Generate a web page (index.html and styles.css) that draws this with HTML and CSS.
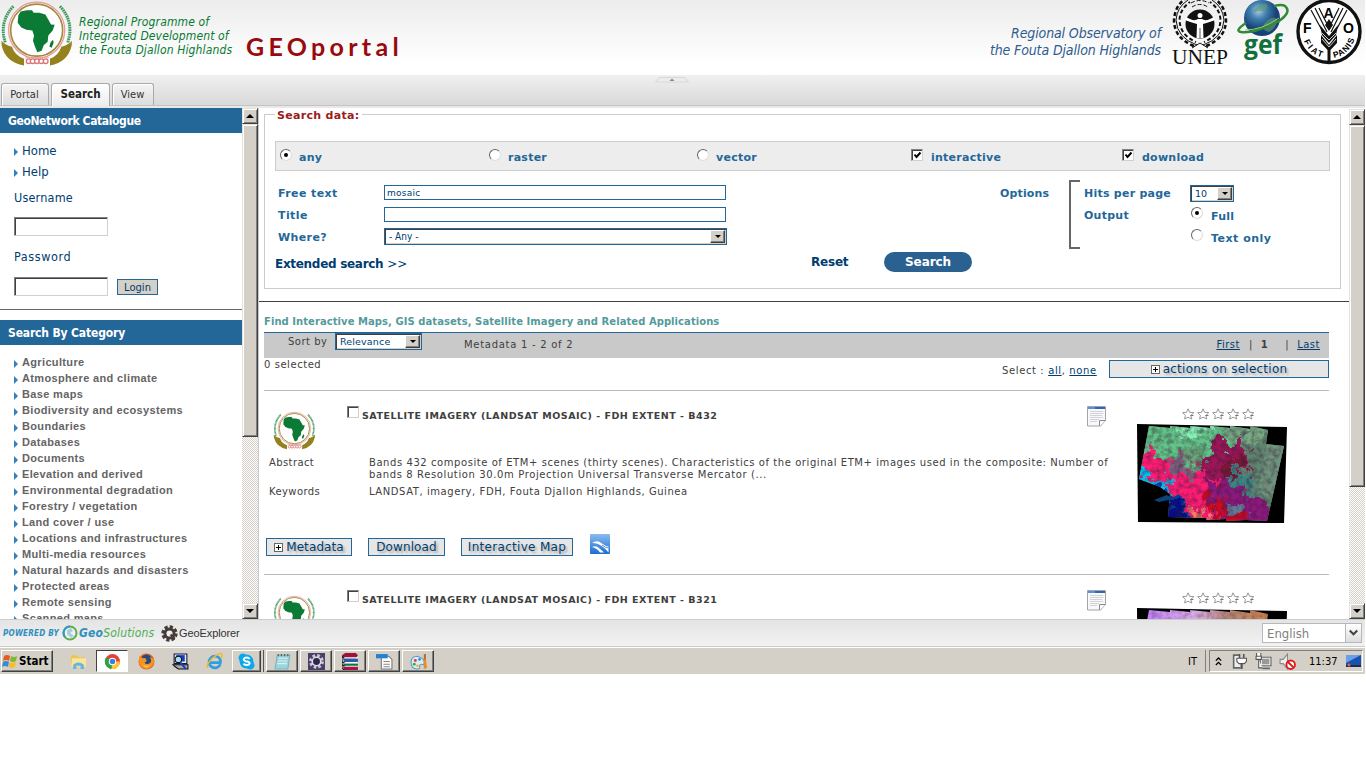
FILE: index.html
```html
<!DOCTYPE html>
<html lang="en">
<head>
<meta charset="utf-8">
<title>GEOportal</title>
<link rel="stylesheet" href="styles.css">
</head>
<body>
<svg class="defs" width="0" height="0">
  <defs>
    <symbol id="africa" viewBox="0 0 216 200">
      <circle cx="110" cy="90" r="84" fill="#fff" stroke="#e39a9a" stroke-width="4"/>
      <circle cx="110" cy="90" r="78" fill="#fff" stroke="#a58a3c" stroke-width="5"/>
      <path d="M55 45 62 34 80 30 96 30 101 38 118 38 136 43 146 60 153 73 164 74 158 91 145 106 143 125 131 135 125 152 112 156 105 140 99 122 102 106 97 91 79 89 64 82 53 68zM159 119l2 9-6 15-7-4 4-13z" fill="#0a7a34"/>
      <path d="M40 18Q-4 66 16 128" fill="none" stroke="#3f9a60" stroke-width="9" stroke-dasharray="5 2"/>
      <path d="M180 18Q224 66 203 128" fill="none" stroke="#3f9a60" stroke-width="9" stroke-dasharray="5 2"/>
      <path d="M4 122q10 12 32 18 8 26 36 36v20q-56-10-67-60zM216 122q-10 12-32 18-8 26-34 36v20q54-10 65-60z" fill="#96811f"/>
      <g fill="#fff" stroke="#dd7777" stroke-width="4"><circle cx="86" cy="183" r="7"/><circle cx="98" cy="183" r="7"/><circle cx="111" cy="183" r="7"/><circle cx="124" cy="183" r="7"/><circle cx="137" cy="183" r="7"/></g>
      <path d="M76 173h70" stroke="#e7a2a2" stroke-width="3"/>
    </symbol>
    <symbol id="note" viewBox="0 0 20 21">
      <path d="M.5.5h18v14l-5 5.500H.5z" fill="#f8f8f8" stroke="#a4a4a4"/>
      <path d="M1 1h17v2H1z" fill="#5b8fd6"/><path d="M8 1h10v2H8z" fill="#2e66bd"/>
      <path d="M3 5.500h13M3 7.500h13M3 9.500h12M3 11.500h13M3 13.500h9M3 15.500h7" stroke="#d0d4da"/>
      <path d="M12.500 20v-5.500h6" fill="#fff" stroke="#8a8a8a"/>
    </symbol>
    <symbol id="star" viewBox="0 0 13 12">
      <path d="M6 .8 7.600 4.300 11.800 4.700 8.800 7.400 9.800 11 6 9.200 2.600 11 3.400 7.400.6 4.700 4.600 4.300z" fill="#fff" stroke="#999"/>
      <path d="M8.500 7.500h3" stroke="#777"/>
    </symbol>
    <filter id="rough" x="-5%" y="-5%" width="110%" height="110%" color-interpolation-filters="sRGB">
      <feTurbulence type="fractalNoise" baseFrequency="0.08" numOctaves="5" seed="7" result="n"/>
      <feDisplacementMap in="SourceGraphic" in2="n" scale="34" xChannelSelector="R" yChannelSelector="G"/>
    </filter>
    <filter id="grain" x="0" y="0" width="100%" height="100%" color-interpolation-filters="sRGB">
      <feTurbulence type="fractalNoise" baseFrequency="0.2" numOctaves="4" seed="3"/>
      <feColorMatrix values="0 0 0 0 .2  0 0 0 0 .1  0 0 0 0 .2  1 0 0 0 -.36"/>
    </filter>
    <clipPath id="mosaic"><path d="M12 2 33 4V2l20 2V2l20 2V2l20 2V2l20 3V2l18 4-2 14 18 2-17 75-21-1-20 1v-2l-20 1v-2l-38-1 2-23-10-7-21-8z"/></clipPath>
  </defs>
</svg>

<div class="app">
  <header class="banner">
    <svg class="banner-logo" viewBox="0 0 216 200"><use href="#africa"/></svg>
    <div class="tagline">Regional Programme of<br>Integrated Development of<br>the Fouta Djallon Highlands</div>
    <h1 class="brand">GEOportal</h1>
    <div class="observatory">Regional Observatory of<br>the Fouta Djallon Highlands</div>
    <svg class="unep" viewBox="0 0 56 66">
      <g fill="none" stroke="#111">
        <path d="M25 45Q5 38 4 20 5 7 16 0M31 45Q51 38 52 20 51 7 40 0"/>
        <path d="M22 46Q2 38 2 20 3 6 13-1M34 46Q54 38 54 20 53 6 43-1" stroke-width="2.500" stroke-dasharray="4 2.500"/>
        <path d="M24 42Q8 35 7.500 20 8 9 18 2M32 42Q48 35 48.500 20 48 9 38 2" stroke-width="2" stroke-dasharray="4 2.500" stroke-dashoffset="3"/>
        <path d="M19 3Q28-2 37 3M20 7Q28 2 36 7" stroke-dasharray="4 2"/>
        <path d="M20 48 28 43 36 48"/>
      </g>
      <circle cx="28" cy="24" r="14.500" fill="#111"/>
      <path d="M14 17q8 5 12 2h4q4 3 12-2v3.500q-8 2.500-11 3.500l.5 14h-7l.5-14q-3-1-11-3.500z" fill="#fff"/>
      <circle cx="28" cy="15.500" r="2.500" fill="#fff"/><path d="M28 28v10" stroke="#111" stroke-width=".7"/>
      <text x="0" y="64" class="unep-text" textLength="56" lengthAdjust="spacingAndGlyphs">UNEP</text>
    </svg>
    <svg class="gef" viewBox="0 0 54 64">
      <defs><radialGradient id="globe" cx=".4" cy=".3"><stop offset="0" stop-color="#a9cbe4"/><stop offset=".45" stop-color="#4180b0"/><stop offset="1" stop-color="#174177"/></radialGradient></defs>
      <circle cx="26" cy="18" r="18" fill="url(#globe)"/>
      <path d="M17 12q5-9 13-8 4 3-2 7-6 0-11 1zM28 24q7-9 13-5 0 9-8 13-8-1-5-8z" fill="#5d9a72" opacity=".65"/>
      <path d="M10 23Q-2 31 5 32 18 34 43 21 56 12 49 6 46 4 38 6" fill="none" stroke="#2f8c35" stroke-width="2.500"/>
      <path d="M9 30Q26 30 43 18" fill="none" stroke="#9cce77"/>
      <text x="8" y="54" class="gef-text" textLength="38" lengthAdjust="spacingAndGlyphs">gef</text>
    </svg>
    <svg class="fao" viewBox="0 0 66 66">
      <defs><path id="fiat" d="M8 41A26 26 0 0 0 29 58"/><path id="panis" d="M38 58A26 26 0 0 0 59 36"/></defs>
      <circle cx="33" cy="31.500" r="31" fill="#fff" stroke="#111" stroke-width="3.400"/>
      <g class="fao-text"><text x="7" y="33">F</text><text x="27.500" y="18">A</text><text x="47" y="33">O</text></g>
      <g fill="none" stroke="#111" stroke-width="1.200"><path d="M15 10 28 34M19 8 31 32M47 8 35 32M51 10 38 34M23 8 31 24M43 8 35 24"/></g>
      <path d="M33 19 37 25 33 31 29 25zM24 25 33 36 42 25 40 35 33 43 26 35zM25 35 33 45 41 35 41 43 34.500 50V61h-3V50L25 43z" fill="#111"/>
      <path d="M26 33 33 40 40 33M26 39 33 47 40 39" fill="none" stroke="#fff" stroke-width=".8"/>
      <g class="fao-ring"><text><textPath href="#fiat" textLength="25">FIAT</textPath></text><text><textPath href="#panis" textLength="29">PANIS</textPath></text></g>
    </svg>
  </header>

  <nav class="tabs">
    <span class="tab tab-portal">Portal</span><span class="tab active">Search</span><span class="tab tab-view">View</span>
    <svg class="collapse" viewBox="0 0 36 6"><path d="M5.500 .5h25l4 4.500H1.500z" fill="#ececec" stroke="#d8d8d8"/><path d="M18 1.500 20.500 4h-5z" fill="#888"/></svg>
  </nav>

  <main class="body">
    <aside class="sidebar">
      <div class="side-content">
        <h2 class="side-title">GeoNetwork Catalogue</h2>
        <div class="login">
          <a class="side-link">Home</a>
          <a class="side-link">Help</a>
          <label class="user-label">Username</label>
          <span class="sunken"></span>
          <label class="pass-label">Password</label>
          <div class="pass-row"><span class="sunken"></span><button class="login-btn">Login</button></div>
        </div>
        <h2 class="side-title">Search By Category</h2>
        <ul class="cats">
          <li>Agriculture</li><li>Atmosphere and climate</li><li>Base maps</li><li>Biodiversity and ecosystems</li><li>Boundaries</li><li>Databases</li><li>Documents</li><li>Elevation and derived</li><li>Environmental degradation</li><li>Forestry / vegetation</li><li>Land cover / use</li><li>Locations and infrastructures</li><li>Multi-media resources</li><li>Natural hazards and disasters</li><li>Protected areas</li><li>Remote sensing</li><li>Scanned maps</li>
        </ul>
      </div>
      <div class="scrollbar"><span class="sb-btn up"></span><span class="sb-thumb side-thumb"></span><span class="sb-track"></span><span class="sb-btn down"></span></div>
    </aside>

    <section class="content">
      <div class="page">
        <div class="search-box">
          <span class="legend">Search data:</span>
          <div class="types">
            <span class="type t1"><i class="radio on"></i><b>any</b></span>
            <span class="type t2"><i class="radio"></i><b>raster</b></span>
            <span class="type t3"><i class="radio"></i><b>vector</b></span>
            <span class="type t4"><i class="check"><svg viewBox="0 0 9 9"><path d="m1.500 3.500 2 2.500 4-4.500" fill="none" stroke="#000" stroke-width="2"/></svg></i><b>interactive</b></span>
            <span class="type t5"><i class="check"><svg viewBox="0 0 9 9"><path d="m1.500 3.500 2 2.500 4-4.500" fill="none" stroke="#000" stroke-width="2"/></svg></i><b>download</b></span>
          </div>
          <div class="form">
            <div class="fields">
              <div class="field"><label>Free text</label><span class="text-input">mosaic</span></div>
              <div class="field"><label>Title</label><span class="text-input"></span></div>
              <div class="field"><label>Where?</label><span class="select where"><em>- Any -</em><i></i></span></div>
            </div>
            <div class="opt-label">Options</div>
            <div class="options">
              <div class="opt"><label>Hits per page</label><span class="select hits"><em>10</em><i></i></span></div>
              <div class="opt"><label>Output</label><i class="radio on"></i><b>Full</b></div>
              <div class="opt"><label></label><i class="radio"></i><b class="wide-b">Text only</b></div>
            </div>
          </div>
          <div class="actions"><a class="extended">Extended search <span>&gt;&gt;</span></a><a class="reset">Reset</a><button class="pill">Search</button></div>
        </div>
        <div class="rule"></div>
        <div class="find">Find Interactive Maps, GIS datasets, Satellite Imagery and Related Applications</div>
        <div class="sortbar">
          <span class="sort-label">Sort by</span><span class="select sort"><em>Relevance</em><i></i></span><span class="count">Metadata 1 - 2 of 2</span>
          <span class="pager"><u>First</u><span>|</span><b>1</b><span class="bar2">|</span><u>Last</u></span>
        </div>
        <div class="selrow"><span class="selected">0 selected</span><span class="selects">Select : <u>all</u>, <u>none</u></span><span class="btn wide"><i class="plus"></i>actions on selection</span></div>

        <article class="record">
          <div class="rec-top">
            <svg class="rec-logo"><use href="#africa"/></svg>
            <i class="check"></i><h3>SATELLITE IMAGERY (LANDSAT MOSAIC) - FDH EXTENT - B432</h3>
            <svg class="note"><use href="#note"/></svg>
          </div>
          <dl class="meta">
            <dt>Abstract</dt><dd>Bands 432 composite of ETM+ scenes (thirty scenes). Characteristics of the original ETM+ images used in the composite: Number of<br><span class="line2">bands 8 Resolution 30.0m Projection Universal Transverse Mercator (...</span></dd>
            <dt>Keywords</dt><dd>LANDSAT, imagery, FDH, Fouta Djallon Highlands, Guinea</dd>
          </dl>
          <div class="btns">
            <span class="btn b1"><i class="plus"></i>Metadata</span><span class="btn b2">Download</span><span class="btn b3">Interactive Map</span>
            <svg class="wind" viewBox="0 0 20 20"><defs><linearGradient id="wb" x2="0" y2="1"><stop stop-color="#8abcf0"/><stop offset="1" stop-color="#1b6fd0"/></linearGradient></defs><rect width="20" height="20" rx="1" fill="url(#wb)"/><path d="M2 9Q7 5.500 12 9.500 15 12 18.500 12.500V18.500Q15 14 11 11.500 7 8.500 2 9z" fill="#fff"/><path d="M12 11Q15 13.500 18.500 14" stroke="#4b92e0" fill="none"/><path d="M2 13Q6 11 9 14L14 18.500H10Q7 14 2 13z" fill="#fff"/></svg>
          </div>
          <div class="thumb">
            <div class="stars"><svg><use href="#star"/></svg><svg><use href="#star"/></svg><svg><use href="#star"/></svg><svg><use href="#star"/></svg><svg><use href="#star"/></svg></div>
            <svg class="map" viewBox="0 0 150 99">
              <path d="M0 0 150 3 147 99 1 98z"/>
              <g clip-path="url(#mosaic)">
                <rect width="150" height="99" fill="#6f8f78"/>
                <g filter="url(#rough)">
                  <path d="M-20-20H170V60L118 55 100 30 78 24 60 38 35 30-20 40z" fill="#62c488"/>
                  <path d="M35-20H75V10L58 14 42 8z" fill="#86efb4"/>
                  <path d="M78-20H160V24L110 28 92 10z" fill="#76a982"/>
                  <path d="M108 15H170V120H122L108 60z" fill="#5f8570"/>
                  <path d="M68 32 80 10 96 20 108 20 108 55 94 68 66 62z" fill="#9c1658"/>
                  <path d="M84 40 104 28 104 56 88 60z" fill="#7d1735"/>
                  <path d="M-20 22 14 26 32 34 60 42 80 62 96 120H40L36 76 22 62-20 58z" fill="#ff1c74"/>
                  <path d="M30 36 50 38 60 46 48 52 34 52z" fill="#7d6280"/>
                  <path d="M66 58 100 60 116 72 134 78V120H88L74 82z" fill="#8d187e"/>
                  <path d="M88 58 100 46 118 56 120 68 104 70z" fill="#3c8583"/>
                  <path d="M68 78 84 72 90 84 76 90zM84 88 98 84 108 96 100 110 80 110z" fill="#cc0a22"/>
                  <path d="M92 76 106 78 110 90 98 92z" fill="#66789a"/>
                  <path d="M53 84 64 88 74 94V120H54z" fill="#fa7a6a"/>
                  <path d="M-20 44 8 48 22 58 34 68 46 78 54 120H-20z" fill="#0040a8"/>
                  <path d="M-20 40 8 44 24 56 36 66 34 69 20 60 6 52-20 50z" fill="#00c4f4"/>
                  <path d="M32 76 44 80 52 120H30z" fill="#050d86"/>
                </g>
                <path d="M49 23 67 22 65 38 45 36z" fill="#6aa377" opacity=".75"/>
                <path d="M130 20 150 22 138 76 121 68z" fill="#7a9d84" opacity=".65"/>
                <rect width="150" height="99" filter="url(#grain)"/>
              </g>
              <path d="M17 76 30 71 36 75 22 78z" fill="#0b4478"/>
            </svg>
          </div>
        </article>

        <article class="record">
          <div class="rec-top">
            <svg class="rec-logo"><use href="#africa"/></svg>
            <i class="check"></i><h3>SATELLITE IMAGERY (LANDSAT MOSAIC) - FDH EXTENT - B321</h3>
            <svg class="note"><use href="#note"/></svg>
          </div>
          <div class="thumb">
            <div class="stars"><svg><use href="#star"/></svg><svg><use href="#star"/></svg><svg><use href="#star"/></svg><svg><use href="#star"/></svg><svg><use href="#star"/></svg></div>
            <svg class="map" viewBox="0 0 150 99">
              <defs><linearGradient id="m2"><stop offset=".05" stop-color="#c080fa"/><stop offset=".4" stop-color="#deb0e8"/><stop offset=".58" stop-color="#b88a80"/><stop offset=".85" stop-color="#c8804c"/></linearGradient></defs>
              <path d="M0 0 150 3 147 99 1 98z"/>
              <g clip-path="url(#mosaic)"><rect width="150" height="99" fill="url(#m2)"/><rect width="150" height="99" filter="url(#grain)" opacity=".6"/></g>
            </svg>
          </div>
        </article>
      </div>
      <div class="scrollbar main-sb"><span class="sb-btn up"></span><span class="sb-thumb main-thumb"></span><span class="sb-track"></span><span class="sb-btn down"></span></div>
    </section>
  </main>

  <footer class="status">
    <span class="powered">POWERED BY</span>
    <svg class="geo-ring" viewBox="0 0 16 16"><circle cx="8" cy="8" r="6.500" fill="#e9f2f7" stroke="#5dae46" stroke-width="2"/><path d="M8 1.500A6.500 6.500 0 0 0 3 12" fill="none" stroke="#3d96c2" stroke-width="2"/><path d="M5 5 9 3l2 3-3 2 4 3-3 2-4-4z" fill="#a9cbdb"/></svg>
    <span class="geosol"><b>Geo</b>Solutions</span>
    <svg class="gear" viewBox="0 0 16 16"><circle cx="8" cy="8" r="6.200" fill="none" stroke="#463c37" stroke-width="3" stroke-dasharray="3 1.870"/><circle cx="8" cy="8" r="4.300" fill="#eee" stroke="#463c37" stroke-width="2.800"/><path d="m9 9 4 4" stroke="#463c37" stroke-width="2"/></svg>
    <span class="explorer">GeoExplorer</span>
    <span class="lang"><em>English</em><i><svg viewBox="0 0 16 18"><path d="m4 7 4 4 4-4" fill="none" stroke="#444" stroke-width="2.200"/></svg></i></span>
  </footer>

  <div class="taskbar">
    <span class="start"><svg viewBox="0 0 16 16"><path d="M2 3q3-2 6 0L7 8Q4 6 1 8z" fill="#e65a25"/><path d="M9 3q3 2 6 0l-1 5q-3 2-6 0z" fill="#80b735"/><path d="M1 9q3-2 6 0l-1 5q-3-2-6 0z" fill="#398bd0"/><path d="M8 9q3 2 6 0l-1 5q-3 2-6 0z" fill="#f6bd26"/></svg>Start</span>
    <span class="task flat"><svg viewBox="0 0 16 16"><path d="M1 2h6l1 2h6v9H1z" fill="#edc452"/><path d="M2 5h13v8H1z" fill="#fbe49c"/><path d="M3 15v-4q5-4 10 0v4h-3v-3H6v3z" fill="#63b5e4"/></svg></span>
    <span class="task pressed"><svg viewBox="0 0 16 16"><circle cx="8" cy="8" r="7" fill="#e34133"/><path d="M8 8 2 4A7 7 0 0 0 7 15z" fill="#2ba24b"/><path d="M8 8h7a7 7 0 0 1-8 7z" fill="#fbcb2e"/><circle cx="8" cy="8" r="3.500" fill="#fff"/><circle cx="8" cy="8" r="2.600" fill="#3b7de0"/></svg></span>
    <span class="task flat"><svg viewBox="0 0 16 16"><circle cx="8" cy="8" r="7.500" fill="#dc6316"/><circle cx="8" cy="6.500" r="5" fill="#244a86"/><path d="M1 3q2 0 3 2 4-1 4 2 0 2-2 2 2 3 6 0 1-3-1-5 5 1 4 5-2 6-7 6-7-1-7-7z" fill="#f8941d"/><path d="M3 8q3 6 8 3-2 4-5 2z" fill="#fdca55"/></svg></span>
    <span class="task flat"><svg viewBox="0 0 16 16"><path d="M2 1h12v9H2z" fill="#e9e9ef" stroke="#15163f"/><path d="M4 2h8v6H4z" fill="#173fc2"/><path d="M1 11h14v4H6l-3-2z" fill="#aaa" stroke="#111"/><circle cx="6" cy="6" r="3" fill="#a8ddf7" stroke="#111"/><path d="m8 9 5 6" stroke="#173fc2" stroke-width="2"/></svg></span>
    <span class="task flat"><svg viewBox="0 0 16 16"><path d="M13.500 10.500A5.500 5.500 0 1 1 13 5.500q1 2 .5 3.500H4" fill="none" stroke="#2f9ee0" stroke-width="2.600"/><path d="M2 14Q-1 12 6 5 13-1 15 1q1 1-1 4" fill="none" stroke="#f1b92c" stroke-width="1.400"/></svg></span>
    <span class="task raised skype"><svg viewBox="0 0 16 16"><circle cx="8" cy="8" r="6.500" fill="#0aa9ed"/><circle cx="4.500" cy="4.500" r="4" fill="#0aa9ed"/><circle cx="11.500" cy="11.500" r="4" fill="#0aa9ed"/><path d="M11 5.500Q9 3.500 6.500 4.500 4 6.500 7 7.700 11 8 11 9.700 10 12.500 5 10.500" fill="none" stroke="#fff" stroke-width="1.800"/></svg></span>
    <span class="task raised"><svg viewBox="0 0 16 16"><path d="M3 2h12l-2 13H1z" fill="#9bd4dc" stroke="#7eb3bb"/><path d="M4 5h9M3.500 7.500h9M3 10h9" stroke="#d8f1f4"/><path d="M4 1v2M7 1v2M10 1v2M13 1v2" stroke="#555"/></svg></span>
    <span class="task raised"><svg viewBox="0 0 16 16"><path d="M0 0h16v16H0z" fill="#4a3e6a"/><circle cx="8" cy="8" r="5.500" fill="none" stroke="#c9c6d8" stroke-width="3" stroke-dasharray="2.400 1.920"/><circle cx="8" cy="8" r="4" fill="#2d254c" stroke="#ddd" stroke-width="1.500"/></svg></span>
    <span class="task raised"><svg viewBox="0 0 16 16"><path d="M0 2 3 0h10l2 2-2 3H2z" fill="#9e123a"/><path d="M2 4.500h13" stroke="#fff"/><path d="M1 5.500h14v3.500H2z" fill="#225fb1"/><path d="M3 9h12" stroke="#fff"/><path d="M1 10h14v2.500H2z" fill="#127149"/><path d="M3 12.500h12" stroke="#fff"/><path d="M1 13h14v3H2z" fill="#a21840"/><path d="M0 2v12l2 2M2 5 0 3M2 9.500 0 8M2 12.500 0 11" stroke="#1b1b1b" fill="none"/></svg></span>
    <span class="task raised"><svg viewBox="0 0 16 16"><path d="M5 3h7l3 3v9H5z" fill="#fff" stroke="#777"/><path d="M0 1h11v4H0z" fill="#2481cf"/><path d="M7 8h6M7 10.500h6M7 13h6" stroke="#888"/></svg></span>
    <span class="task raised"><svg viewBox="0 0 16 16"><path d="M7 3Q1 3 1 9t6 6q3 0 2-3 0-2 4-1 2-6-6-8z" fill="#d9eef9" stroke="#5a9fc2"/><circle cx="5" cy="7" r="1.400" fill="#de403b"/><circle cx="9" cy="6" r="1.300" fill="#3a8ad0"/><circle cx="4" cy="10.500" r="1.400" fill="#44a846"/><circle cx="7" cy="12" r="1.200" fill="#eeb51f"/><path d="M14 1v6" stroke="#ba6d25" stroke-width="2"/><path d="M13 6h2l1 8-3 1z" fill="#ef8a20"/></svg></span>
    <span class="it">IT</span>
    <span class="tray">
      <svg class="chev" viewBox="0 0 8 12"><path d="m1 5 3-3 3 3M1 10l3-3 3 3" fill="none" stroke="#000" stroke-width="1.500"/></svg>
      <svg class="plug" viewBox="0 0 16 16"><path d="M8 2H2.500v12H9" fill="#eee" stroke="#666" stroke-width="1.500"/><path d="M8 1v4M12 1v4" stroke="#555" stroke-width="1.500"/><path d="M5.500 5h9v3l-2 2h-5l-2-2z" fill="#fff" stroke="#555"/><path d="M10 10v5" stroke="#555" stroke-width="2"/></svg>
      <svg class="net" viewBox="0 0 16 16"><path d="M5 4h10v8H5z" fill="#999" stroke="#555"/><path d="M6 5h8v6H6z" fill="none" stroke="#eee"/><path d="M7 14.500h7" stroke="#666" stroke-width="1.500"/><path d="M1.500 0v3h4V0M1 3h5v3H1zM3.500 6v8H7" fill="#fff" stroke="#555"/></svg>
      <svg class="vol" viewBox="0 0 16 16"><path d="M1 6h3l4-5v14l-4-5H1z" fill="#eee" stroke="#888"/><circle cx="11" cy="11" r="4" fill="#fff" stroke="#dc1c1c" stroke-width="1.800"/><path d="m8.200 8.200 5.600 5.600" stroke="#dc1c1c" stroke-width="1.800"/></svg>
      <span class="clock">11:37</span>
      <svg class="desk" viewBox="0 0 15 12"><path d="M0 0h15v12H0z" fill="#1651b1"/><path d="M0 0h15L0 8z" fill="#699fe4"/><path d="M0 10h15v2H0z" fill="#202a48"/><circle cx="3" cy="10" r="1.500" fill="#e86037"/></svg>
    </span>
  </div>
</div>
</body>
</html>
```
FILE: styles.css
```css
* { box-sizing: border-box; }
body { margin: 0; background: #fff; font-family: "DejaVu Sans", Verdana, sans-serif; overflow: hidden; }
h1, h2, h3, ul, dl, dd, dt { margin: 0; padding: 0; }
em, i { font-style: normal; }
svg { display: block; flex: none; }
.defs { position: absolute; }
.app { width: 1365px; height: 674px; display: flex; flex-direction: column; white-space: nowrap; }

/* banner */
.banner { height: 75px; display: flex; align-items: flex-start; background: linear-gradient(#ececec, #fff 85%); flex: none; }
.banner-logo { width: 72px; height: 67px; }
.tagline { width: 167px; padding: 15px 0 0 7px; font: italic 12px/14px "DejaVu Sans Condensed", sans-serif; letter-spacing: .13px; color: #087a34; }
.brand { width: 170px; padding: 30px 0 0 7px; font: bold 25px/32px Lato, sans-serif; letter-spacing: 4.300px; color: #990a0e; }
.observatory { margin-left: auto; padding-top: 25px; text-align: right; font: italic 14px/17px "DejaVu Sans Condensed", sans-serif; letter-spacing: -.13px; color: #2e5c8c; }
.unep { width: 56px; height: 66px; margin-left: 11px; overflow: visible; }
.unep-text { font: 20px "Liberation Serif", serif; fill: #111; }
.gef { width: 54px; height: 64px; margin-left: 8px; overflow: visible; }
.gef-text { font: bold 26px "Open Sans", sans-serif; fill: #11703b; }
.fao { width: 66px; height: 66px; margin: 0 3px 0 6px; }
.fao-text { font: bold 14px "Liberation Sans", sans-serif; }
.fao-ring { font: bold 8.500px "Liberation Sans", sans-serif; }

/* tab strip */
.tabs { height: 33px; flex: none; display: flex; align-items: flex-start; padding: 7px 0 0 1px; background: linear-gradient(#efefef, #d9d9d9 29px, #c4c4c4 29px, #c4c4c4 30px, #e8e8e8 30px, #e8e8e8 32px, #d0d0d0 32px); border-top: 1px solid #eee; }
.tab { height: 22px; width: 48px; margin-right: 2px; padding-right: 1px; border: 1px solid #aaa; border-bottom: 0; border-radius: 3px 3px 0 0; background: linear-gradient(#f5f5f5, #dcdcdc); color: #333; font: 11px/21px "DejaVu Sans Condensed", sans-serif; text-align: center; box-shadow: inset 1px 1px #fff; }
.tab.active { width: 59px; height: 23px; padding-right: 0; background: linear-gradient(#fff, #ececec); font-weight: bold; font-size: 11.500px; line-height: 21px; letter-spacing: 0; color: #222; }
.tab-view { width: 42px; }
.collapse { width: 36px; height: 6px; margin: -6px 0 0 498px; }

/* columns */
.body { height: 511px; display: flex; overflow: hidden; flex: none; }
.sidebar { width: 259px; display: flex; border-right: 1px solid #c8c8d0; flex: none; }
.side-content { width: 242px; height: 511px; overflow: hidden; }
.side-title { height: 25px; padding-left: 8px; background: #236799; color: #fff; font: bold 12px/26px "DejaVu Sans Condensed", sans-serif; letter-spacing: -.38px; }
.login + .side-title { letter-spacing: -.15px; }
.login { height: 177px; margin-bottom: 10px; padding: 7px 0 0 14px; border-bottom: 1px solid #666; display: flex; flex-direction: column; font: 13px/21px "DejaVu Sans Condensed", sans-serif; color: #003d70; }
.side-link { height: 21px; display: flex; align-items: center; gap: 4px; }
.side-link::before, .cats li::before { content: ""; width: 0; border: 4px solid transparent; border-left-color: #347fbd; border-right: 0; margin-top: 2px; }
.user-label { height: 21px; margin: 5px 0 9px; font-size: 12.500px; letter-spacing: .2px; }
.pass-label { height: 21px; margin: 10px 0 10px; font-size: 12.500px; letter-spacing: .6px; }
.sunken { width: 94px; height: 19px; background: #fff; border: 1px solid; border-color: #808080 #d4d0c8 #d4d0c8 #808080; box-shadow: inset 1px 1px #404040; flex: none; }
.pass-row { display: flex; gap: 9px; align-items: flex-end; }
.login-btn { width: 41px; height: 16px; margin-bottom: 1px; padding: 1px 0 0; border: 1px solid #236799; background: #d4d0c8; color: #003d70; font: 10px/13px "DejaVu Sans", sans-serif; }
.cats { list-style: none; padding: 9px 0 0 14px; font: bold 11px/16px "Liberation Sans", sans-serif; letter-spacing: .35px; color: #646464; }
.cats li { height: 16px; display: flex; align-items: center; gap: 4px; }
.cats li::before { margin-top: 3px; }

/* scrollbars */
.scrollbar { width: 16px; display: flex; flex-direction: column; }
.sb-btn, .sb-thumb { background: #d4d0c8; border: 1px solid; border-color: #e6e3dd #404040 #404040 #e6e3dd; box-shadow: inset 1px 1px #fff, inset -1px -1px #808080; flex: none; }
.sb-btn { height: 16px; display: grid; place-items: center; }
.sb-btn::after { content: ""; border: 4px solid transparent; }
.sb-btn.up::after { border-top: 0; border-bottom-color: #000; }
.sb-btn.down::after { border-bottom: 0; border-top-color: #000; }
.side-thumb { height: 313px; }
.main-thumb { height: 362px; }
.sb-track { flex: 1; background: conic-gradient(#d4d0c8 25%, #fff 0 50%, #d4d0c8 0 75%, #fff 0) 0 0/2px 2px; }
.main-sb { padding-top: 1px; }

/* search form */
.content { flex: 1; display: flex; min-width: 0; }
.page { width: 1090px; height: 511px; overflow: hidden; color: #404040; }
.search-box { width: 1077px; height: 175px; margin: 6px 0 0 5px; padding: 26px 10px 0; border: 1px solid #ccc; color: #236799; font: bold 11px/14px "DejaVu Sans", sans-serif; letter-spacing: .25px; }
.legend { display: block; width: 87px; height: 14px; margin: -32px 0 18px; padding-left: 2px; background: #fff; color: #9a1c20; letter-spacing: .3px; }
.types { height: 30px; display: flex; background: #ededed; border: 1px solid #ccc; }
.type { display: flex; align-items: flex-start; padding-top: 7px; }
.type b { margin: 2px 0 0 7px; }
.t1 { width: 209px; padding-left: 4px; } .t2 { width: 208px; padding-left: 4px; } .t3 { width: 217px; padding-left: 4px; }
.t4 { width: 211px; padding-left: 1px; } .t5 { padding-left: 1px; }
.t4 b, .t5 b { margin-left: 8px; }
.radio { width: 12px; height: 12px; flex: none; border-radius: 50%; background: #fff; border: 1.500px solid; border-color: #666 #ddd #ddd #666; display: grid; place-items: center; }
.radio.on::after { content: ""; width: 4px; height: 4px; border-radius: 50%; background: #000; }
.check { width: 12px; height: 12px; flex: none; background: #fff; border: 1px solid; border-color: #808080 #d4d0c8 #d4d0c8 #808080; box-shadow: inset 1px 1px #404040; display: grid; place-items: center; }
.check svg { width: 9px; height: 9px; margin: 1px 0 0 1px; }
.form { display: flex; height: 79px; padding-top: 10px; }
.fields { width: 725px; padding: 1px 0 0 3px; }
.field { display: flex; height: 22px; }
.field label { width: 106px; padding-top: 5px; letter-spacing: .4px; }
.text-input { width: 342px; height: 15px; margin-top: 3px; padding-left: 2px; border: 1px solid #236799; color: #003d70; font: 9px/14px "DejaVu Sans", sans-serif; }
.select { display: flex; border: 1px solid #236799; background: #fff; box-shadow: inset 1px 1px #404040, inset -1px -1px #d4d0c8; color: #003d70; font: 10px/15px "DejaVu Sans", sans-serif; }
.select em { flex: 1; padding-left: 4px; }
.select i { width: 15px; margin: 1px 1px 1px 0; background: #d4d0c8; border: 1px solid; border-color: #fff #404040 #404040 #fff; box-shadow: inset -1px -1px #808080; display: grid; place-items: center; }
.select i::after { content: ""; border: 3px solid transparent; border-top-color: #000; border-bottom: 0; }
.where { width: 343px; height: 17px; margin-top: 2px; font: 10px/16px "DejaVu Sans Condensed", sans-serif; letter-spacing: 0; }
.opt-label { width: 69px; padding-top: 6px; letter-spacing: .15px; }
.options { width: 11px; height: 69px; border: 2px solid #666; border-right: 0; padding-top: 2px; margin-top: -1px; }
.opt { display: flex; height: 22px; width: 230px; padding-left: 13px; }
.opt label { width: 107px; padding-top: 3px; }
.opt b { margin: 4px 0 0 8px; }
.opt .wide-b { letter-spacing: .5px; }
.opt .radio { margin-top: 1px; }
.hits { width: 44px; height: 17px; margin-top: 1px; margin-left: -1px; font-size: 9.500px; letter-spacing: 0; }
.actions { display: flex; align-items: flex-start; height: 30px; font-size: 12px; color: #003d70; padding-top: 1px; }
.extended { width: 536px; padding-top: 6px; letter-spacing: -.3px; }
.extended span { font-weight: normal; letter-spacing: 0; }
.reset { width: 73px; padding-top: 4px; letter-spacing: -.2px; }
.pill { width: 88px; height: 20px; margin: 1px 0 0; padding: 0; border: 0; border-radius: 10px; background: #2a6190; color: #fff; font: bold 12px/20px "DejaVu Sans", sans-serif; letter-spacing: -.1px; }
.rule { height: 1px; margin-top: 12px; background: #404040; }

/* results */
.find { height: 30px; padding: 13px 0 0 5px; font: bold 10px/14px "DejaVu Sans", sans-serif; color: #559a9c; letter-spacing: .06px; }
.sortbar { width: 1065px; height: 26px; margin-left: 5px; padding-left: 24px; border-top: 1px solid #236799; background: #c9c9c9; display: flex; font-size: 10px; line-height: 14px; letter-spacing: .5px; }
.sort-label { width: 47px; padding-top: 2px; }
.sort { width: 87px; height: 17px; letter-spacing: .15px; font-size: 9.500px; }
.count { margin-left: 42px; padding-top: 5px; letter-spacing: .72px; }
.pager { margin-left: auto; padding: 5px 9px 0 0; display: flex; letter-spacing: .5px; }
.pager u, .selects u { color: #003d70; }
.pager span { margin: 0 8px 0 9px; }
.pager .bar2 { margin: 0 8px 0 17px; }
.selrow { width: 1065px; height: 33px; margin-left: 5px; display: flex; font-size: 10px; line-height: 14px; letter-spacing: .55px; border-bottom: 1px solid #bbb; }
.selected { width: 738px; }
.selects { width: 107px; padding-top: 6px; letter-spacing: .62px; }
.btn { height: 18px; display: flex; align-items: center; justify-content: center; gap: 3px; border: 1px solid #236799; background: #e6e6e6; color: #003d70; font: 12px/16px "DejaVu Sans", sans-serif; letter-spacing: .1px; text-shadow: 2px 2px 2px #aaa; }
.btn.wide { width: 220px; margin-top: 2px; letter-spacing: .25px; }
.plus { width: 9px; height: 9px; border: 1px solid #666; background: linear-gradient(#000, #000) center/5px 1px no-repeat, linear-gradient(#000, #000) center/1px 5px no-repeat, #fff; }
.record { width: 1065px; height: 184px; margin-left: 5px; border-bottom: 1px solid #bbb; display: grid; grid-template: 65px 78px 40px / 873px 192px; font-size: 10px; letter-spacing: .5px; }
.rec-top { display: flex; align-items: flex-start; padding: 15px 0 0 9px; }
.rec-logo { width: 42px; height: 39px; margin-top: 5px; }
.rec-top .check { margin-left: 32px; }
.rec-top h3 { margin: 3px 0 0 3px; font: bold 9.500px/14px "DejaVu Sans", sans-serif; letter-spacing: .5px; }
.note { width: 20px; height: 21px; margin-left: auto; margin-right: 30px; }
.meta { grid-row: 2; display: grid; grid-template-columns: 100px auto; align-content: start; padding: 1px 0 0 5px; line-height: 12px; }
.meta dt { letter-spacing: .4px; }
.meta dd { margin-bottom: 5px; letter-spacing: .565px; }
.meta .line2 { letter-spacing: .62px; }
.btns { grid-row: 3; display: flex; gap: 16px; padding: 0 0 0 2px; align-items: flex-start; }
.btns .btn { margin-top: 4px; }
.b1 { width: 86px; } .b2 { width: 77px; } .btns .b3 { width: 112px; letter-spacing: .3px; }
.wind { width: 20px; height: 20px; margin-left: 1px; }
.thumb { grid-column: 2; grid-row: 1 / 4; padding-top: 17px; }
.stars { display: flex; gap: 2px; padding-left: 45px; }
.stars svg { width: 13px; height: 12px; }
.map { width: 150px; height: 99px; margin-top: 4px; }

/* status bar */
.status { height: 28px; flex: none; display: flex; align-items: center; padding: 0 3px; background: linear-gradient(#e4e4e4, #f2f2f2); border-top: 1px solid #ccc; border-bottom: 1px solid #d0ccc4; }
.powered { width: 59px; font: italic bold 8px "DejaVu Sans Condensed", sans-serif; letter-spacing: .25px; color: #2f8fbf; }
.geo-ring { width: 16px; height: 16px; }
.geosol { width: 76px; margin: 0 6px 0 1px; font: italic 12px "DejaVu Sans Condensed", sans-serif; letter-spacing: .18px; color: #4caf50; }
.geosol b { color: #2f8fbf; }
.gear { width: 17px; height: 17px; }
.explorer { margin-left: 1px; font: 11px "Liberation Sans", sans-serif; letter-spacing: -.1px; color: #333; }
.lang { margin-left: auto; width: 100px; height: 20px; border: 1px solid #b5b8c0; background: #fff; display: flex; }
.lang em { flex: 1; padding-left: 4px; font: 13px/19px "DejaVu Sans Condensed", sans-serif; color: #808080; }
.lang i { width: 16px; border-left: 1px solid #b5b8c0; background: linear-gradient(#fff, #ddd); }

/* desktop taskbar */
.taskbar { height: 27px; flex: none; display: flex; align-items: center; background: #d4d0c8; border-top: 1px solid #fff; padding-left: 1px; }
.start, .raised { border: 1px solid; border-color: #fff #404040 #404040 #fff; box-shadow: inset -1px -1px #808080; }
.start { width: 52px; height: 22px; display: flex; align-items: center; gap: 1px; font: bold 11.500px "DejaVu Sans Condensed", sans-serif; letter-spacing: 0; margin-right: 9px; }
.start svg { width: 16px; height: 16px; }
.task { width: 32px; height: 22px; margin-right: 2px; display: grid; place-items: center; flex: none; }
.task svg { width: 17px; height: 17px; }
.pressed { background: #fff; border: 1px solid; border-color: #404040 #fff #fff #404040; }
.skype { width: 29px; margin-right: 5px; position: relative; }
.skype::after { content: ""; position: absolute; right: -4px; top: -1px; width: 1px; height: 22px; background: #555; }
.it { margin-left: auto; padding-right: 12px; font: 11px "DejaVu Sans Condensed", sans-serif; }
.tray { width: 154px; height: 22px; border: 1px solid; border-color: #808080 #fff #fff #808080; box-shadow: -3px 0 #d4d0c8, -4px 0 #808080; margin-right: 2px; display: flex; align-items: center; padding-left: 5px; }
.chev { width: 7px; height: 11px; margin-right: 9px; }
.plug, .net, .vol { width: 17px; height: 17px; margin-right: 7px; }
.clock { margin: 0 8px 0 6px; font: 11px "DejaVu Sans Condensed", sans-serif; }
.desk { width: 15px; height: 12px; }
```
